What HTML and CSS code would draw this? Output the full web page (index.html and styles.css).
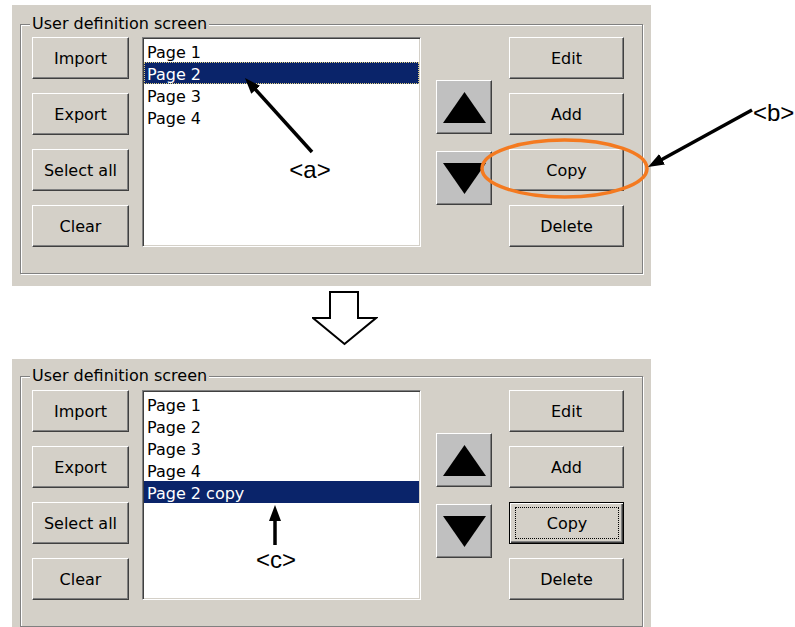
FILE: index.html
```html
<!DOCTYPE html>
<html lang="en">
<head>
<meta charset="UTF-8">
<title>User definition screen - copying a page</title>
<link rel="stylesheet" href="styles.css">
</head>
<body>
<div class="sheet">

    <!-- before: Page 2 selected, Copy pressed -->
    <div class="panel before">
        <fieldset class="group">
            <legend>User definition screen</legend>
            <div class="cols">
                <div class="btncol">
                    <button class="btn">Import</button>
                    <button class="btn">Export</button>
                    <button class="btn">Select all</button>
                    <button class="btn">Clear</button>
                </div>
                <ul class="listbox">
                    <li>Page 1</li>
                    <li class="sel focused">Page 2</li>
                    <li>Page 3</li>
                    <li>Page 4</li>
                </ul>
                <div class="movecol">
                    <button class="mv"><svg width="43" height="31" viewBox="0 0 43 31"><polygon points="21.5,0 43,31 0,31" fill="#000"/></svg></button>
                    <button class="mv"><svg width="43" height="31" viewBox="0 0 43 31"><polygon points="0,0 43,0 21.5,31" fill="#000"/></svg></button>
                </div>
                <div class="btncol right">
                    <button class="btn">Edit</button>
                    <button class="btn">Add</button>
                    <button class="btn">Copy</button>
                    <button class="btn">Delete</button>
                </div>
            </div>
        </fieldset>
    </div>

    <div class="step">
        <svg width="66" height="56" viewBox="0 0 66 56"><polygon points="18,1 46,1 46,27 64,27 32.5,53 1,27 18,27" fill="#fff" stroke="#000" stroke-width="2"/></svg>
    </div>

    <!-- after: new "Page 2 copy" added at the end -->
    <div class="panel after">
        <fieldset class="group">
            <legend>User definition screen</legend>
            <div class="cols">
                <div class="btncol">
                    <button class="btn">Import</button>
                    <button class="btn">Export</button>
                    <button class="btn">Select all</button>
                    <button class="btn">Clear</button>
                </div>
                <ul class="listbox">
                    <li>Page 1</li>
                    <li>Page 2</li>
                    <li>Page 3</li>
                    <li>Page 4</li>
                    <li class="sel">Page 2 copy</li>
                </ul>
                <div class="movecol">
                    <button class="mv"><svg width="43" height="31" viewBox="0 0 43 31"><polygon points="21.5,0 43,31 0,31" fill="#000"/></svg></button>
                    <button class="mv"><svg width="43" height="31" viewBox="0 0 43 31"><polygon points="0,0 43,0 21.5,31" fill="#000"/></svg></button>
                </div>
                <div class="btncol right">
                    <button class="btn">Edit</button>
                    <button class="btn">Add</button>
                    <button class="btn default"><span class="ring">Copy</span></button>
                    <button class="btn">Delete</button>
                </div>
            </div>
        </fieldset>
    </div>

    <!-- callouts drawn over the screenshots -->
    <svg class="notes" width="795" height="627" viewBox="0 0 795 627">
        <defs>
            <marker id="head" viewBox="0 0 16 12" markerWidth="16" markerHeight="12" refX="6" refY="6" orient="auto" markerUnits="userSpaceOnUse">
                <path d="M0,0 L16,6 L0,12 z" fill="#000"/>
            </marker>
        </defs>
        <line x1="312" y1="152" x2="251.7" y2="85.4" stroke="#000" stroke-width="3.5" marker-end="url(#head)"/>
        <text x="310" y="178" text-anchor="middle" class="tag">&lt;a&gt;</text>

        <ellipse cx="564.5" cy="168.5" rx="82.5" ry="28.5" fill="none" stroke="#f47a20" stroke-width="3.5"/>
        <line x1="752" y1="110" x2="656.8" y2="162.2" stroke="#000" stroke-width="3.5" marker-end="url(#head)"/>
        <text x="753" y="121" class="tag">&lt;b&gt;</text>

        <line x1="275" y1="545" x2="275" y2="515" stroke="#000" stroke-width="3.5" marker-end="url(#head)"/>
        <text x="276" y="568" text-anchor="middle" class="tag">&lt;c&gt;</text>
    </svg>

</div>
</body>
</html>
```

FILE: styles.css
```css
body {margin: 0; background: #fff; font-family: "DejaVu Sans", Verdana, sans-serif; font-size: 16px; color: #000;}
.sheet {position: relative; width: 795px; height: 627px; overflow: hidden; padding-top: 5px; box-sizing: border-box;}

/* dialog panel */
.panel {margin-left: 12px; width: 639px; height: 281px; box-sizing: border-box; background: #d4d0c8; padding: 8px 0 0 8px;}
.panel.before {padding-top: 10px;}
.group {margin: 0; min-width: 0; width: 623px; box-sizing: border-box; border: 1px solid #808080; box-shadow: 1px 1px 0 #fff, inset 1px 1px 0 #fff; padding: 5px 18px 26px 11px;}
.panel.before .group {padding-top: 4px;}
.group legend {padding: 0 2px; margin-left: -2px; line-height: 18px; background: #d4d0c8;}
.cols {display: flex; align-items: flex-start;}

/* push buttons */
.btncol {display: flex; flex-direction: column; gap: 14px; width: 97px;}
.btncol.right {width: 115px; margin-left: 17px;}
.btn {display: flex; align-items: center; justify-content: center; height: 42px; padding: 0; font: inherit; color: #000; background: #d4d0c8; border: 1px solid; border-color: #fff #404040 #404040 #fff; box-shadow: inset -1px -1px 0 #808080;}
.btn.default {border-color: #000; box-shadow: inset 1px 1px 0 #fff, inset -1px -1px 0 #404040, inset -2px -2px 0 #808080; padding: 4px 4px 4px 5px;}
.btn .ring {flex: 1; align-self: stretch; display: flex; align-items: center; justify-content: center; border: 1px dotted #000;}

/* list */
.listbox {margin: 0 0 0 13px; padding: 2px 1px 0; list-style: none; width: 279px; height: 210px; box-sizing: border-box; background: #fff; border: 1px solid; border-color: #808080 #fff #fff #808080; box-shadow: inset 1px 1px 0 #404040, inset -1px -1px 0 #d4d0c8;}
.listbox li {height: 20px; line-height: 22px; padding: 2px 0 0 3px;}
.listbox .sel {background: #0a246a; color: #fff;}
.listbox .focused {outline: 1px dotted #e0d080; outline-offset: -1px;}

/* move up / down */
.movecol {display: flex; flex-direction: column; gap: 17px; width: 56px; margin-left: 15px; padding-top: 43px;}
.mv {display: flex; align-items: center; justify-content: center; width: 56px; height: 54px; padding: 0; background: #c0c0c0; border: 1px solid; border-color: #fff #404040 #404040 #fff; box-shadow: inset -1px -1px 0 #808080;}
.mv svg {display: block;}

/* arrow between the two states */
.step {height: 73px; padding: 5px 0 0 312px; box-sizing: border-box;}
.step svg {display: block;}

/* callouts */
.notes {position: absolute; left: 0; top: 0; pointer-events: none;}
.notes .tag {font-family: "Liberation Sans", Arial, sans-serif; font-size: 24px; fill: #000;}
```
